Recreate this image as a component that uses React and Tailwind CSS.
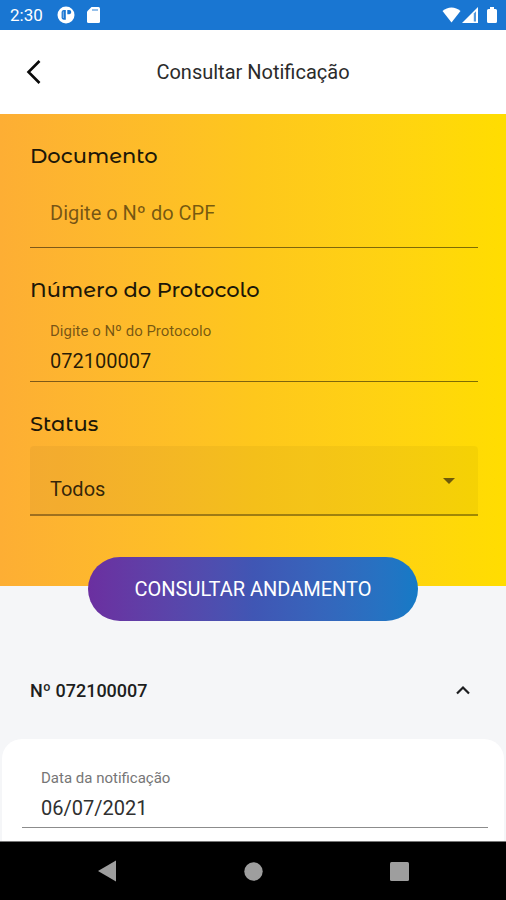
import React from "react";

function StatusBar() {
  return (
    <div className="flex h-[30px] items-center justify-between bg-[#1976d2] pl-[10px] pr-2 text-white">
      <div className="flex items-center">
        <span className="w-[47px] text-[17px] leading-5">2:30</span>
        <svg className="h-[18px] w-[18px]" viewBox="0 0 18 18" aria-hidden="true">
          <circle cx="9" cy="9" r="8.5" fill="#fff" />
          <path d="M8.800 4H6.800C5.300 4 4.600 4.900 4.600 6.400v4.800c0 1.600.8 2.500 2.300 2.500h1.900z" fill="#1976d2" />
          <path d="M6.300 5.500v6.500" stroke="#fff" strokeWidth="1" opacity=".5" />
          <path d="M10.300 4h1.900c1.300 0 2 .8 2 2.100s-.7 2.200-2 2.200h-1.900z" fill="#1976d2" />
        </svg>
        <svg className="ml-[11px] h-[18px] w-[15px]" viewBox="0 0 15 18" aria-hidden="true">
          <path d="M5.500 1H12.500Q14 1 14 2.500V15.500Q14 17 12.500 17H2.500Q1 17 1 15.500V5.500z" fill="#fff" />
          <path d="M6 4h6" stroke="#1976d2" strokeWidth="2" opacity=".45" />
        </svg>
      </div>
      <div className="flex items-center">
        <svg className="h-[18px] w-[19px]" viewBox="0 0 19 18" aria-hidden="true">
          <path d="M.5 5Q4.500 1.500 9.500 1.500T18.500 5L9.500 16.500z" fill="#fff" />
        </svg>
        <svg className="ml-px h-[18px] w-4" viewBox="0 0 16 18" aria-hidden="true">
          <path d="M0 17L16 1V17z" fill="#fff" />
          <path d="M11.800 7.500V15.500H14V5.300z" fill="#1976d2" opacity=".75" />
        </svg>
        <svg className="ml-2 h-[18px] w-3" viewBox="0 0 12 18" aria-hidden="true">
          <path d="M4 1h4v2h1.500Q11 3 11 4.500V15.500Q11 17 9.500 17H2.500Q1 17 1 15.500V4.500Q1 3 2.500 3H4z" fill="#fff" />
        </svg>
      </div>
    </div>
  );
}

function Header() {
  return (
    <header className="grid h-[84px] grid-cols-[68px_1fr_68px] items-center bg-white">
      <button type="button" aria-label="Voltar" className="flex h-12 w-[68px] items-center justify-center">
        <svg className="h-7 w-4" viewBox="0 0 16 28" fill="none" stroke="#0a0a0a" strokeWidth="2.600" aria-hidden="true">
          <path d="M13.500 3L2.500 14l11 11" />
        </svg>
      </button>
      <h1 className="text-center text-[20px] leading-7 text-[#2b2b2b]">Consultar Notificação</h1>
    </header>
  );
}

const heading = "block font-['Montserrat_Alternates','Montserrat',Inter,sans-serif] text-[21px] font-medium leading-7 text-[#1c1708]";

function SearchForm() {
  return (
    <form className="flex flex-col" onSubmit={(e) => e.preventDefault()}>
      <div className="flex flex-col gap-7 bg-linear-to-r from-[#fdae34] via-[#fec71c] to-[#ffdd00] pb-[70px] pl-[30px] pr-7 pt-7">
        <div className="flex flex-col gap-2">
          <label htmlFor="cpf" className={heading}>Documento</label>
          <input
            id="cpf"
            placeholder="Digite o Nº do CPF"
            className="h-[70px] w-full border-b border-black/50 bg-transparent px-5 text-[20px] text-black/85 outline-none placeholder:text-black/55"
          />
        </div>
        <div className="flex flex-col gap-2">
          <h2 className={heading}>Número do Protocolo</h2>
          <div className="flex h-[70px] flex-col border-b border-black/50 px-5 pt-[9px]">
            <label htmlFor="protocolo" className="text-[15px] leading-5 text-black/55">Digite o Nº do Protocolo</label>
            <input id="protocolo" defaultValue="072100007" className="h-10 w-full bg-transparent text-[20px] text-black/85 outline-none" />
          </div>
        </div>
        <div className="flex flex-col gap-2">
          <label htmlFor="status" className={heading}>Status</label>
          <div className="grid">
            <select
              id="status"
              className="col-start-1 row-start-1 h-[70px] w-full appearance-none rounded-t-[4px] border-b-2 border-black/35 bg-black/4 px-5 pt-[18px] text-[20px] text-black/80 outline-none"
            >
              <option>Todos</option>
            </select>
            <svg className="pointer-events-none col-start-1 row-start-1 mr-[23px] h-[6px] w-3 self-center justify-self-end" viewBox="0 0 12 6" aria-hidden="true">
              <path d="M0 0h12L6 6z" fill="#6e5a0a" />
            </svg>
          </div>
        </div>
      </div>
      <button
        type="submit"
        className="-mt-[29px] h-16 w-[330px] self-center rounded-full bg-linear-to-r from-[#6b2fa0] via-[#4056b4] to-[#147ac6] text-[20px] text-white"
      >
        CONSULTAR ANDAMENTO
      </button>
    </form>
  );
}

function Result() {
  return (
    <section className="flex flex-1 flex-col">
      <button
        type="button"
        aria-expanded="true"
        className="mt-[45px] flex h-12 items-center justify-between pl-[30px] pr-9 text-[18px] font-medium text-[#1d1e20]"
      >
        Nº 072100007
        <svg className="h-[10px] w-[14px]" viewBox="0 0 14 10" fill="none" stroke="#1d1e20" strokeWidth="2.200" aria-hidden="true">
          <path d="M1 8.500l6-6 6 6" />
        </svg>
      </button>
      <div className="mx-[2px] mt-[25px] flex-1 rounded-t-[20px] bg-white pl-5 pr-4 pt-[29px]">
        <div className="flex h-[60px] flex-col border-b border-[#8c8c8c] pl-[19px]">
          <label htmlFor="data" className="text-[15px] leading-5 text-[#767676]">Data da notificação</label>
          <input id="data" readOnly defaultValue="06/07/2021" className="h-10 w-full shrink-0 bg-transparent text-[20px] text-[#303030] outline-none" />
        </div>
      </div>
    </section>
  );
}

function NavBar() {
  return (
    <nav className="flex h-[59px] items-center justify-center gap-[127px] border-t border-[#777] bg-black text-[#9e9e9e]">
      <button type="button" aria-label="Retornar">
        <svg className="h-[22px] w-[19px]" viewBox="0 0 19 22" fill="currentColor" aria-hidden="true"><path d="M0 11L18 .5v21z" /></svg>
      </button>
      <button type="button" aria-label="Início">
        <svg className="h-[19px] w-[19px]" viewBox="0 0 19 19" fill="currentColor" aria-hidden="true"><circle cx="9.500" cy="9.500" r="9.200" /></svg>
      </button>
      <button type="button" aria-label="Recentes">
        <svg className="h-[19px] w-[19px]" viewBox="0 0 19 19" fill="currentColor" aria-hidden="true"><rect width="19" height="19" rx="1.500" /></svg>
      </button>
    </nav>
  );
}

export default function App() {
  return (
    <div className="flex min-h-screen flex-col bg-[#f5f6f8] font-[Roboto,sans-serif]">
      <StatusBar />
      <Header />
      <main className="flex flex-1 flex-col">
        <SearchForm />
        <Result />
      </main>
      <NavBar />
    </div>
  );
}
